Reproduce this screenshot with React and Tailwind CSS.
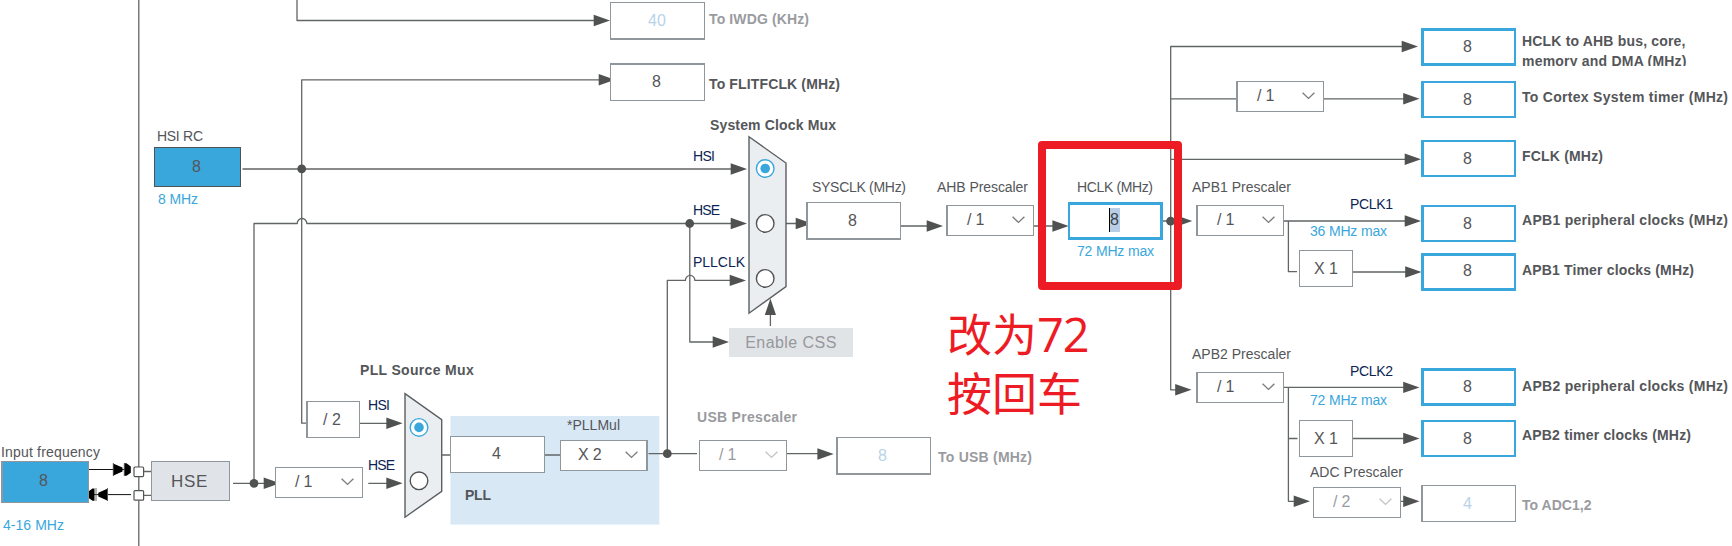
import React from "react";

let ctx;
function naturalWidth(text, bold) {
  if (!ctx) ctx = document.createElement("canvas").getContext("2d");
  ctx.font = `${bold ? "bold " : ""}14px "Liberation Sans"`;
  return ctx.measureText(text).width;
}

const tones = {
  ink: "text-[#545659]",
  mute: "text-[#9a9b9f]",
  blue: "text-[#39a7dc]",
  navy: "text-[#0b2454]",
};

/* Caption whose tracking is spread so that the text fills `w` pixels. */
function Label({ at, w, tone = "ink", bold = false, children }) {
  const tracking = (w - naturalWidth(children, bold)) / (children.length - 1);
  return (
    <span
      className={`absolute whitespace-pre text-[14px] leading-4 ${bold ? "font-bold" : ""} ${tones[tone]} ${at}`}
      style={{ letterSpacing: `${tracking}px` }}
    >
      {children}
    </span>
  );
}

function Box({ at, line = "border border-[#8f979d]", fill = "bg-white", tone = "ink", pad = "pr-[2px] pb-[2px]", children }) {
  return (
    <div className={`absolute flex items-center justify-center text-[16px] leading-none ${line} ${fill} ${tones[tone] || tone} ${pad} ${at}`}>
      {children}
    </div>
  );
}

function Out({ at, pad, children = "8" }) {
  return (
    <Box at={`left-[1421px] w-[95px] ${at}`} line="border-2 border-l-3 border-[#39a7dc]" pad={pad || "pr-[3px]"}>
      {children}
    </Box>
  );
}

function Select({ at, inset = "pl-[19px]", off = false, children }) {
  return (
    <div className={`absolute flex h-[31px] w-[88px] items-center justify-between border border-[#8f979d] bg-white pb-px pr-[8px] text-[16px] leading-none ${inset} ${off ? "text-[#9a9b9f]" : "text-[#545659]"} ${at}`}>
      <span className="whitespace-pre tracking-[-0.2px]">{children}</span>
      <svg width="13" height="8" viewBox="0 0 13 8" fill="none" stroke={off ? "#c2c4c6" : "#7b7d7f"} strokeWidth="1.4">
        <path d="M0.6 0.8 L6.5 6.4 L12.4 0.8" />
      </svg>
    </div>
  );
}

const arrows = [
  [610, 20.5], [615, 79.8], [747, 169], [747, 223.5], [746, 280.4], [729, 342],
  [402.6, 423.3], [402.6, 483.3], [280, 483.3], [812, 223.5], [833.7, 454],
  [943, 226], [1068.7, 226], [1192.3, 221], [1191.5, 389.8],
  [1418, 46.5], [1419.5, 98.8], [1421, 159.3], [1421, 221], [1421.5, 272],
  [1419.5, 387.4], [1419.5, 438.5], [1310, 501.3], [1419.5, 501.3],
];

const dots = [[301.7, 168.8], [254, 483.3], [689.7, 223.5], [667.3, 453.7], [1170.6, 221.2]];

function Radio({ x, y, on }) {
  return (
    <g>
      <circle cx={x} cy={y} r="8.8" fill="#fff" stroke={on ? "#39a7dc" : "#505356"} strokeWidth="1.4" />
      {on && <circle cx={x} cy={y} r="4.8" fill="#39a7dc" />}
    </g>
  );
}

function Wires() {
  return (
    <svg className="absolute left-0 top-0" width="1732" height="546" viewBox="0 0 1732 546" fill="none">
      <rect x="450.5" y="416" width="208.8" height="108.5" fill="#d8e8f5" />
      <g stroke="#626565" strokeWidth="1.3" strokeLinejoin="round">
        <path d="M138.8 0V546" />
        <path d="M297 0V20.5H600" />
        <path d="M306 423.2H301.7V79.8H605" />
        <path d="M242.5 169H740" />
        <path d="M254 483V223.5H297.2A4.6 4.8 0 0 1 306.8 223.5H740" />
        <path d="M689.8 223.5V342H720" />
        <path d="M667.3 453.7V280.4H685.4A4.6 4.8 0 0 1 694.9 280.4H738" />
        <path d="M360 423.3H395M233 483.3H270M368.3 483.3H395" />
        <path d="M441.7 455H451M545 455H560M648.5 453.7H697M786 453.7H826" />
        <path d="M786 223.5H806M901 226H935M1034 226H1060M1163 221H1184" />
        <path d="M770.4 326V312" />
        <path d="M1410 46.5H1170.7V389.8H1184M1170.7 98.8H1410M1170.7 159.3H1410" />
        <path d="M1284 221H1410M1288.4 221V271.7H1297M1353 272H1410" />
        <path d="M1284 387.4H1410M1288.4 387.4V501.3H1300M1288.4 438.5H1297.5M1353 438.5H1410M1401 501.3H1410" />
        <path d="M143 471.5H152M143 495.4H152" />
      </g>
      <path d="M89 469.5H126M94 494.6H131" stroke="#111" />
      <g fill="#000">
        <path d="M113 463.5L122.5 467.6V471.4L113 475.7ZM124.2 463.3H126.5L130.8 466.5V472.8L126.5 475.7H124.2Z" />
        <path d="M107.8 488.6L98.3 492.7V496.5L107.8 500.8ZM94.5 488.4H92.5L89 491V498.2L92.5 500.8H94.5Z" />
      </g>
      <path d="M113.3 463V476M124.3 463V476M96 488V501M107.5 488V501" stroke="#555" strokeWidth="0.9" />
      <g fill="#fff" stroke="#505356" strokeWidth="1.2">
        <rect x="134" y="467" width="9.6" height="9.6" rx="1" />
        <rect x="134" y="490.6" width="9.6" height="9.6" rx="1" />
      </g>
      <g fill="#eaeef1" stroke="#5c5f61" strokeWidth="1.4">
        <path d="M405 393.6L441.7 419.7V491.3L405 517.2Z" />
        <path d="M749 136.8L786 163V286.6L749 313.2Z" />
      </g>
      <Radio x={419} y={427.4} on />
      <Radio x={419} y={480.8} />
      <Radio x={765.2} y={168.5} on />
      <Radio x={765.2} y={223.4} />
      <Radio x={765.2} y={278.4} />
      <g fill="#505252">
        {arrows.map(([x, y]) => (
          <path key={`${x}-${y}`} d={`M${x} ${y}l-16.3 -5.7v11.4z`} />
        ))}
        <path d="M770.4 298.5l5.6 16.5h-11.2z" />
        {dots.map(([x, y]) => (
          <circle key={`${x}-${y}`} cx={x} cy={y} r="4.4" />
        ))}
      </g>
    </svg>
  );
}

export default function App() {
  return (
    <main className="relative h-[546px] w-[1732px] overflow-hidden bg-white font-['Liberation_Sans',Arial,sans-serif]">
      <Wires />

      {/* Oscillator inputs */}
      <Label at="left-[157px] top-[128px]" w={46}>HSI RC</Label>
      <Box at="left-[154px] top-[147px] h-[40px] w-[87px]" line="border border-[#505356]" fill="bg-[#39a7dc]" pad="pr-[2px] pb-px">8</Box>
      <Label at="left-[158px] top-[191px]" w={40} tone="blue">8 MHz</Label>
      <Label at="left-[1px] top-[444px]" w={99}>Input frequency</Label>
      <Box at="left-[1px] top-[461px] h-[42px] w-[88px]" line="border border-l-2 border-[#8f979d]" fill="bg-[#39a7dc]" pad="pr-[4px] pb-[2px]">8</Box>
      <Label at="left-[3px] top-[517px]" w={61} tone="blue">4-16 MHz</Label>
      <Box at="left-[151px] top-[461px] h-[40px] w-[79px]" line="border border-[#8f979d]" fill="bg-[#e0e4e8]" pad="pr-[2px]">
        <span className="text-[17px] leading-none tracking-[0.7px]">HSE</span>
      </Box>

      {/* IWDG and FLITF outputs */}
      <Box at="left-[610px] top-[2px] h-[38px] w-[95px]" line="border border-b-2 border-[#8f979d]" tone="text-[#b8d3e8]" pad="pr-[1px]">40</Box>
      <Label at="left-[709px] top-[11px]" w={100} tone="mute" bold>To IWDG (KHz)</Label>
      <Box at="left-[610px] top-[63px] h-[38px] w-[95px]" line="border border-t-2 border-[#8f979d]" pad="pr-[2px] pb-[2px]">8</Box>
      <Label at="left-[709px] top-[76px]" w={131} bold>To FLITFCLK (MHz)</Label>

      {/* System clock mux */}
      <Label at="left-[710px] top-[117px]" w={126} bold>System Clock Mux</Label>
      <Label at="left-[693px] top-[148px]" w={22} tone="navy">HSI</Label>
      <Label at="left-[693px] top-[202px]" w={27} tone="navy">HSE</Label>
      <Label at="left-[693px] top-[254px]" w={52} tone="navy">PLLCLK</Label>
      <Label at="left-[812px] top-[179px]" w={94}>SYSCLK (MHz)</Label>
      <Box at="left-[806px] top-[202px] h-[38px] w-[95px]" line="border border-b-2 border-l-2 border-[#8f979d]" pad="pr-[3px]">8</Box>
      <Box at="left-[729px] top-[328px] h-[29px] w-[124px] tracking-[0.45px]" line="" fill="bg-[#e0e4e7]" tone="text-[#96989c]" pad="pt-px">Enable CSS</Box>

      {/* PLL */}
      <Label at="left-[360px] top-[362px]" w={114} bold>PLL Source Mux</Label>
      <Box at="left-[306px] top-[401px] h-[37px] w-[54px]" line="border border-l-2 border-[#8f979d]" pad="pr-[3px]">/ 2</Box>
      <Label at="left-[368px] top-[397px]" w={22} tone="navy">HSI</Label>
      <Label at="left-[368px] top-[457px]" w={27} tone="navy">HSE</Label>
      <Select at="left-[275px] top-[467px]">/ 1</Select>
      <Box at="left-[450px] top-[436px] h-[37px] w-[95px]">4</Box>
      <Label at="left-[567px] top-[417px]" w={53}>*PLLMul</Label>
      <Select at="left-[560px] top-[440px] border-r-2" inset="pl-[17px]">X 2</Select>
      <Label at="left-[465px] top-[487px]" w={26} bold>PLL</Label>

      {/* USB */}
      <Label at="left-[697px] top-[409px]" w={100} tone="mute" bold>USB Prescaler</Label>
      <Select at="left-[699px] top-[440px]" off>/ 1</Select>
      <Box at="left-[836px] top-[437px] h-[38px] w-[95px]" line="border border-b-2 border-l-2 border-[#8f979d]" tone="text-[#b8d3e8]" pad="pr-[3px]">8</Box>
      <Label at="left-[938px] top-[449px]" w={94} tone="mute" bold>To USB (MHz)</Label>

      {/* AHB prescaler and HCLK */}
      <Label at="left-[937px] top-[179px]" w={91}>AHB Prescaler</Label>
      <Select at="left-[946px] top-[205px] border-l-2">/ 1</Select>
      <Label at="left-[1077px] top-[179px]" w={76}>HCLK (MHz)</Label>
      <div className="absolute left-[1068px] top-[202px] flex h-[38px] w-[95px] border-3 border-l-2 border-[#39a7dc] bg-white pl-[39px] pt-[3px]">
        <span className="flex h-[24px] w-[11px] items-center border-l border-black bg-[#b8cee6] text-[16px] leading-none text-[#3c3f46]">8</span>
      </div>
      <Label at="left-[1077px] top-[243px]" w={77} tone="blue">72 MHz max</Label>

      {/* AHB outputs */}
      <Out at="top-[28px] h-[38px] border-y-3" pad="pr-[3px] pb-px" />
      <div className="absolute left-[1522px] top-[28px] h-[38px] w-[200px] overflow-hidden">
        <Label at="left-0 top-[5px]" w={164} bold>HCLK to AHB bus, core,</Label>
        <Label at="left-0 top-[25px]" w={165} bold>memory and DMA (MHz)</Label>
      </div>
      <Select at="left-[1236px] top-[81px] border-l-2">/ 1</Select>
      <Out at="top-[81px] h-[37px]" />
      <Label at="left-[1522px] top-[89px]" w={206} bold>To Cortex System timer (MHz)</Label>
      <Out at="top-[140px] h-[37px]" />
      <Label at="left-[1522px] top-[148px]" w={81} bold>FCLK (MHz)</Label>

      {/* APB1 */}
      <Label at="left-[1192px] top-[179px]" w={99}>APB1 Prescaler</Label>
      <Select at="left-[1196px] top-[205px] border-l-2">/ 1</Select>
      <Label at="left-[1350px] top-[196px]" w={43} tone="navy">PCLK1</Label>
      <Label at="left-[1310px] top-[223px]" w={77} tone="blue">36 MHz max</Label>
      <Box at="left-[1299px] top-[250px] h-[37px] w-[54px]" pad="">X 1</Box>
      <Out at="top-[205px] h-[37px]" />
      <Label at="left-[1522px] top-[212px]" w={206} bold>APB1 peripheral clocks (MHz)</Label>
      <Out at="top-[253px] h-[38px] border-y-3" pad="pr-[3px] pb-[2px]" />
      <Label at="left-[1522px] top-[262px]" w={172} bold>APB1 Timer clocks (MHz)</Label>

      {/* APB2 and ADC */}
      <Label at="left-[1192px] top-[346px]" w={99}>APB2 Prescaler</Label>
      <Select at="left-[1196px] top-[372px] border-l-2">/ 1</Select>
      <Label at="left-[1350px] top-[363px]" w={43} tone="navy">PCLK2</Label>
      <Label at="left-[1310px] top-[392px]" w={77} tone="blue">72 MHz max</Label>
      <Box at="left-[1299px] top-[420px] h-[37px] w-[54px]" pad="">X 1</Box>
      <Out at="top-[368px] h-[38px] border-y-3" pad="pr-[3px] pb-px" />
      <Label at="left-[1522px] top-[378px]" w={206} bold>APB2 peripheral clocks (MHz)</Label>
      <Out at="top-[420px] h-[37px]" />
      <Label at="left-[1522px] top-[427px]" w={169} bold>APB2 timer clocks (MHz)</Label>
      <Label at="left-[1310px] top-[464px]" w={93}>ADC Prescaler</Label>
      <Select at="left-[1313px] top-[487px]" off>/ 2</Select>
      <Box at="left-[1421px] top-[485px] h-[37px] w-[95px]" line="border border-l-2 border-[#8f979d]" tone="text-[#b8d3e8]" pad="pr-[3px]">4</Box>
      <Label at="left-[1522px] top-[497px]" w={70} tone="mute" bold>To ADC1,2</Label>

      {/* Annotation */}
      <div className="absolute left-[1038px] top-[141px] h-[149px] w-[144px] rounded-[4px] border-8 border-[#ed1c24]" />
      <div className="absolute left-[947px] top-[303px] text-[45px] leading-[59px] text-[#ed1c24] font-['Noto_Sans_CJK_SC',sans-serif]">
        <p className="whitespace-nowrap">
          改为<span className="text-[47px] leading-none tracking-[-1.2px] font-['Open_Sans',sans-serif]">72</span>
        </p>
        <p className="whitespace-nowrap">按回车</p>
      </div>
    </main>
  );
}
